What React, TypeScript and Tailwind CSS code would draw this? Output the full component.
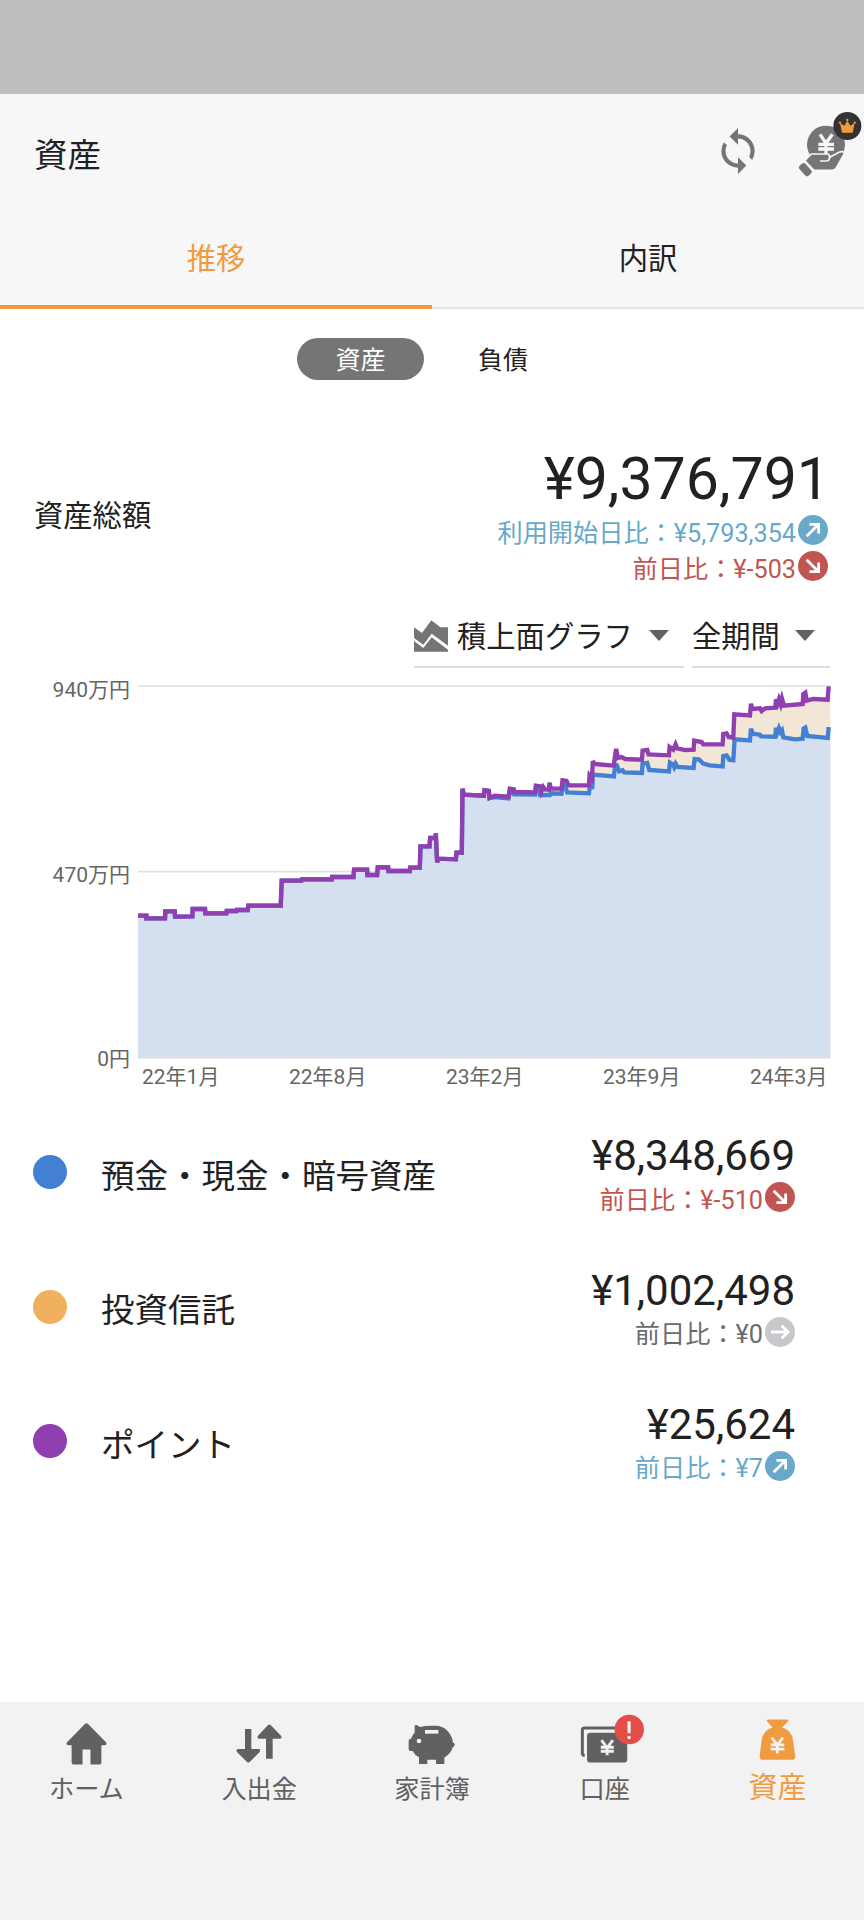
import type { ReactNode } from "react"
import { MdSync } from "react-icons/md"

type Trend = "up" | "down" | "flat"

const trendText = {
  up: "text-[#68a8c9]",
  down: "text-[#c15552]",
  flat: "text-[#6b6b6b]",
}

const trendBg = {
  up: "bg-[#68a8c9]",
  down: "bg-[#c15552]",
  flat: "bg-[#c7c7cc]",
}

const trendRotate = {
  up: "-rotate-45",
  down: "rotate-45",
  flat: "rotate-0",
}

// Shared by both series, the investment part only starts after this point
const baseLine =
  "325,736 350,736 350,744 406,744 407,723 435,723 436,739 488,738 489,716 526,716 527,729 590,729 591,722 620,722 621,719 654,719 656,706 753,706 756,631 815,631 816,627 906,627 907,620 971,620 973,598 1012,598 1013,614 1042,614 1044,591 1075,591 1076,602 1140,602 1141,592 1170,592 1172,528 1199,528 1201,503 1217,503 1218,489 1222,576 1225,565 1278,567 1280,547 1296,547 1298,355 1302,373 1362,376 1364,360 1377,362 1379,383"

const cashLine =
  baseLine +
  " 1395,380 1436,384 1440,360 1452,372 1516,373 1518,352 1528,355 1531,374 1560,374 1562,369 1595,370 1598,345 1605,345 1612,366 1677,369 1680,350 1687,350 1689,313 1752,318 1756,285 1761,285 1768,303 1778,300 1783,306 1836,308 1838,280 1852,278 1858,299 1917,303 1920,277 1930,283 1933,290 1937,280 1943,290 1991,293 1994,266 2007,267 2020,280 2040,285 2078,288 2080,257 2090,255 2098,268 2110,270 2114,207 2160,210 2163,175 2168,190 2190,193 2193,198 2236,199 2238,173 2243,184 2247,173 2252,185 2256,180 2260,201 2295,207 2318,205 2321,175 2326,172 2332,197 2393,203 2396,170"

const totalLine =
  baseLine +
  " 1395,376 1436,379 1440,355 1452,357 1453,365 1516,366 1518,346 1533,348 1535,362 1540,350 1545,357 1557,358 1559,337 1563,355 1595,355 1598,330 1610,332 1616,345 1677,345 1679,316 1686,325 1689,272 1693,281 1752,286 1755,258 1759,236 1764,263 1775,260 1786,266 1836,268 1838,241 1852,239 1856,252 1917,255 1919,230 1930,238 1937,222 1942,234 1965,239 1991,238 1993,211 2015,215 2020,222 2078,222 2080,191 2090,189 2096,200 2110,202 2113,132 2160,135 2163,100 2167,116 2190,114 2195,122 2205,114 2236,112 2238,87 2243,100 2247,87 2252,102 2256,85 2262,106 2318,101 2320,71 2326,67 2330,91 2350,86 2393,88 2396,48"

const accounts: { name: string; amount: string; diff: string; trend: Trend; dot: string }[] = [
  { name: "預金・現金・暗号資産", amount: "¥8,348,669", diff: "¥-510", trend: "down", dot: "bg-[#4380d3]" },
  { name: "投資信託", amount: "¥1,002,498", diff: "¥0", trend: "flat", dot: "bg-[#f1b05f]" },
  { name: "ポイント", amount: "¥25,624", diff: "¥7", trend: "up", dot: "bg-[#8f3fb0]" },
]

function TrendRow({ label, value, trend }: { label: string; value: string; trend: Trend }) {
  return (
    <div className={`flex h-9 items-center justify-end text-[25.2px] leading-9 ${trendText[trend]}`}>
      <span className="pt-[3px]">
        {label}：{value}
      </span>
      <span className={`mb-1 ml-0.5 flex size-[30px] items-center justify-center rounded-full ${trendBg[trend]}`}>
        <svg viewBox="0 0 30 30" className={`size-[30px] ${trendRotate[trend]}`} fill="none" stroke="#fff" strokeWidth="2.8">
          <path d="M6 15H23M16.5 8.5L23 15L16.5 21.5" />
        </svg>
      </span>
    </div>
  )
}

function YenHandIcon() {
  return (
    <svg viewBox="324 33 192 198" className="h-[66px] w-16">
      <circle cx="408" cy="134" r="57" fill="#757575" />
      <path d="M390 103L408 130L427 103M408 130V168M385 133H432M385 147H432" fill="none" stroke="#f7f7f7" strokeWidth="10" />
      <path
        d="M344 182L364 162H412Q420 163 419 172L447 157Q460 151 463 161L438 205Q434 211 426 211H372Z"
        fill="#757575"
        stroke="#f7f7f7"
        strokeWidth="5"
      />
      <path d="M390 183H410Q419 182 419 171" fill="none" stroke="#f7f7f7" strokeWidth="5" />
      <rect x="326" y="197" width="40" height="24" rx="8" fill="#757575" transform="rotate(48 346 209)" />
      <circle cx="472" cy="78" r="42" fill="#333" />
      <path d="M450 69L463 77L472 62L481 77L494 69L488 98H456Z" fill="#f19b41" />
      <circle cx="450" cy="68" r="3.5" fill="#f19b41" />
      <circle cx="472" cy="60" r="3.5" fill="#f19b41" />
      <circle cx="494" cy="68" r="3.5" fill="#f19b41" />
    </svg>
  )
}

function HomeIcon() {
  return (
    <svg viewBox="196 96 124 132" className="h-11 w-[41px]" fill="currentColor">
      <path d="M254 101Q258 97 262 101L317 157Q321 165 313 166H303V218Q303 224 297 224H270V179H246V224H219Q213 224 213 218V166H203Q195 165 199 157Z" />
    </svg>
  )
}

function TransferIcon() {
  return (
    <svg viewBox="708 96 138 132" className="h-11 w-[46px]" fill="currentColor">
      <path d="M735 117H754V177H776Q783 179 779 186L749 216Q745 219 741 216L711 186Q707 179 714 177H735Z" />
      <path d="M798 206H818V146H840Q847 144 843 137L812 105Q808 102 804 105L774 137Q770 144 777 146H798Z" />
    </svg>
  )
}

function PiggyIcon() {
  return (
    <svg viewBox="1224 96 144 132" className="h-11 w-12" fill="currentColor">
      <path d="M1244 107Q1248 102 1260 111Q1274 107 1296 107H1308Q1345 109 1358 150V157Q1365 159 1364 166Q1363 171 1358 172Q1354 190 1333 203V222H1308V209H1282V222H1257V202Q1244 196 1238 183H1231Q1226 183 1226 177V152Q1227 146 1233 146Q1237 134 1244 128Z" />
      <circle cx="1257" cy="153" r="7" fill="#f2f2f2" />
      <path d="M1275 120H1315V131H1275Z" fill="#f2f2f2" />
    </svg>
  )
}

function AccountIcon() {
  return (
    <svg viewBox="445 66 194 152" className="mb-[11px] ml-4 h-[51px] w-[65px]">
      <path d="M570 111H458Q452 111 452 117V186Q452 192 459 193" fill="none" stroke="#616161" strokeWidth="9" />
      <rect x="463" y="122" width="126" height="95" rx="13" fill="#616161" stroke="#f2f2f2" strokeWidth="6" />
      <path d="M509 147L526 170L543 147M526 166V192M507 168H546M507 180H546" fill="none" stroke="#f2f2f2" strokeWidth="8.5" />
      <circle cx="592" cy="115" r="44" fill="#e54e48" />
      <path d="M587 91H596V126H587Z" fill="#fff" />
      <circle cx="591.5" cy="139" r="5" fill="#fff" />
    </svg>
  )
}

function MoneyBagIcon() {
  return (
    <svg viewBox="980 84 111 128" className="mb-[9px] h-[43px] w-[37px]">
      <path
        d="M1008 88H1063Q1071 89 1066 95L1049 112Q1078 120 1082 150L1089 198Q1089 209 1079 209H992Q982 209 982 198L988 150Q992 120 1021 112L1005 95Q1000 89 1008 88Z"
        fill="#f19b41"
      />
      <path d="M1018 142L1035 165L1052 142M1035 162V190M1015 164H1056M1015 177H1056" fill="none" stroke="#f2f2f2" strokeWidth="8.5" />
    </svg>
  )
}

function Select({ className, label, icon }: { className: string; label: string; icon?: ReactNode }) {
  return (
    <div className={`flex h-16 items-center border-b-2 border-[#dcdcdc] text-[29.3px] text-[#212121] ${className}`}>
      {icon}
      <span className="pt-[5px]">{label}</span>
      <svg viewBox="0 0 20 11" className="mr-[15px] ml-auto h-[11px] w-5">
        <path d="M0 0H20L10 11Z" fill="#616161" />
      </svg>
    </div>
  )
}

function AreaChartIcon() {
  return (
    <svg viewBox="42 566 102 96" className="mt-0.5 mr-[9px] h-8 w-[34px]" fill="#757575">
      <path d="M42 588L66 605L94 567L121 588H144V643L95 607L70 640L42 620Z" />
      <path d="M42 629L70 650L95 618L144 655V661H42Z" />
    </svg>
  )
}

function AssetChart() {
  return (
    <div className="mt-3.5">
      <div className="flex">
        <div className="-mt-[5px] flex h-[395px] w-[130px] flex-col justify-between text-right text-[21px] leading-[26px] text-[#666]">
          <span>940万円</span>
          <span>470万円</span>
          <span>0円</span>
        </div>
        <svg viewBox="325 35 2078 1140" className="ml-2 h-[380px] w-[693px]" preserveAspectRatio="none">
          <path d="M325 47H2401M325 604H2401" stroke="#e0e0e0" strokeWidth="5" />
          <polygon points={`${totalLine} 2401,48 2401,1160 325,1160`} fill="#f2e6d7" />
          <polygon points={`${cashLine} 2401,170 2401,1160 325,1160`} fill="#d4dff0" />
          <path d="M325 1162H2401" stroke="#dddee2" strokeWidth="5" />
          <polyline points={cashLine} fill="none" stroke="#4380d3" strokeWidth="13" />
          <polyline points={totalLine} fill="none" stroke="#8f3fb0" strokeWidth="13" />
        </svg>
      </div>
      <div className="-mt-[9px] flex pl-[142px] text-[21px] leading-7 text-[#666]">
        <span className="w-[147px]">22年1月</span>
        <span className="w-[157px]">22年8月</span>
        <span className="w-[157px]">23年2月</span>
        <span className="w-[147px]">23年9月</span>
        <span>24年3月</span>
      </div>
    </div>
  )
}

function NavItem({ icon, label, active = false }: { icon: ReactNode; label: string; active?: boolean }) {
  return (
    <div className="flex flex-1 flex-col items-center pt-[17px]">
      <div className="flex h-[50px] items-center justify-center">{icon}</div>
      <span
        className={
          active
            ? "mt-px text-[29px] leading-[36px] text-[#f19b41]"
            : "mt-[3px] text-[25.2px] leading-[36px] text-[#616161]"
        }
      >
        {label}
      </span>
    </div>
  )
}

export default function App() {
  return (
    <div className="flex h-[1920px] w-[864px] flex-col overflow-hidden bg-white font-['Roboto','Noto_Sans_CJK_JP',sans-serif] text-[#212121]">
      <div className="h-[94px] shrink-0 bg-[#bdbdbd]" />

      <header className="shrink-0 bg-[#f7f7f7]">
        <div className="flex h-[120px] items-center pl-[34px]">
          <h1 className="pt-1 text-[33.5px]">資産</h1>
          <MdSync className="mr-[35px] mb-1.5 ml-auto size-[50px] text-[#757575]" />
          <div className="mr-0.5 mb-5">
            <YenHandIcon />
          </div>
        </div>
        <div className="flex h-[95px] text-[29.3px]">
          <div className="flex flex-1 items-center justify-center border-b-4 border-[#f19b41] text-[#f19b41]">推移</div>
          <div className="flex flex-1 items-center justify-center border-b-2 border-[#e6e6e6] pb-0.5">内訳</div>
        </div>
      </header>

      <div className="mt-[29px] flex h-[42px] shrink-0 pl-[297px] text-[25px]">
        <div className="flex w-[127px] items-center justify-center rounded-full bg-[#757575] pt-1 text-white">資産</div>
        <div className="ml-[54px] flex items-center pt-1">負債</div>
      </div>

      <section className="mt-[63px] flex shrink-0 items-center justify-between pr-9 pl-[34px]">
        <h2 className="pt-1 text-[29.3px]">資産総額</h2>
        <div className="text-right">
          <div className="-mr-0.5 text-[59px] leading-[71px]">¥9,376,791</div>
          <TrendRow label="利用開始日比" value="¥5,793,354" trend="up" />
          <TrendRow label="前日比" value="¥-503" trend="down" />
        </div>
      </section>

      <div className="mt-[18px] flex shrink-0 justify-end gap-2 pr-[34px]">
        <Select className="w-[270px]" label="積上面グラフ" icon={<AreaChartIcon />} />
        <Select className="w-[138px]" label="全期間" />
      </div>

      <AssetChart />

      <div className="mt-3.5 shrink-0">
        {accounts.map((account) => (
          <div key={account.name} className="flex h-[134.4px] items-center pr-[69px] pl-[33px]">
            <span className={`size-[34px] rounded-full ${account.dot}`} />
            <span className="mt-2.5 ml-[34px] text-[33.5px]">{account.name}</span>
            <div className="mt-1 ml-auto text-right">
              <div className="text-[42px] leading-[50px]">{account.amount}</div>
              <TrendRow label="前日比" value={account.diff} trend={account.trend} />
            </div>
          </div>
        ))}
      </div>

      <nav className="mt-auto flex h-[218px] shrink-0 bg-[#f2f2f2] text-[#616161]">
        <NavItem icon={<HomeIcon />} label="ホーム" />
        <NavItem icon={<TransferIcon />} label="入出金" />
        <NavItem icon={<PiggyIcon />} label="家計簿" />
        <NavItem icon={<AccountIcon />} label="口座" />
        <NavItem icon={<MoneyBagIcon />} label="資産" active />
      </nav>
    </div>
  )
}
